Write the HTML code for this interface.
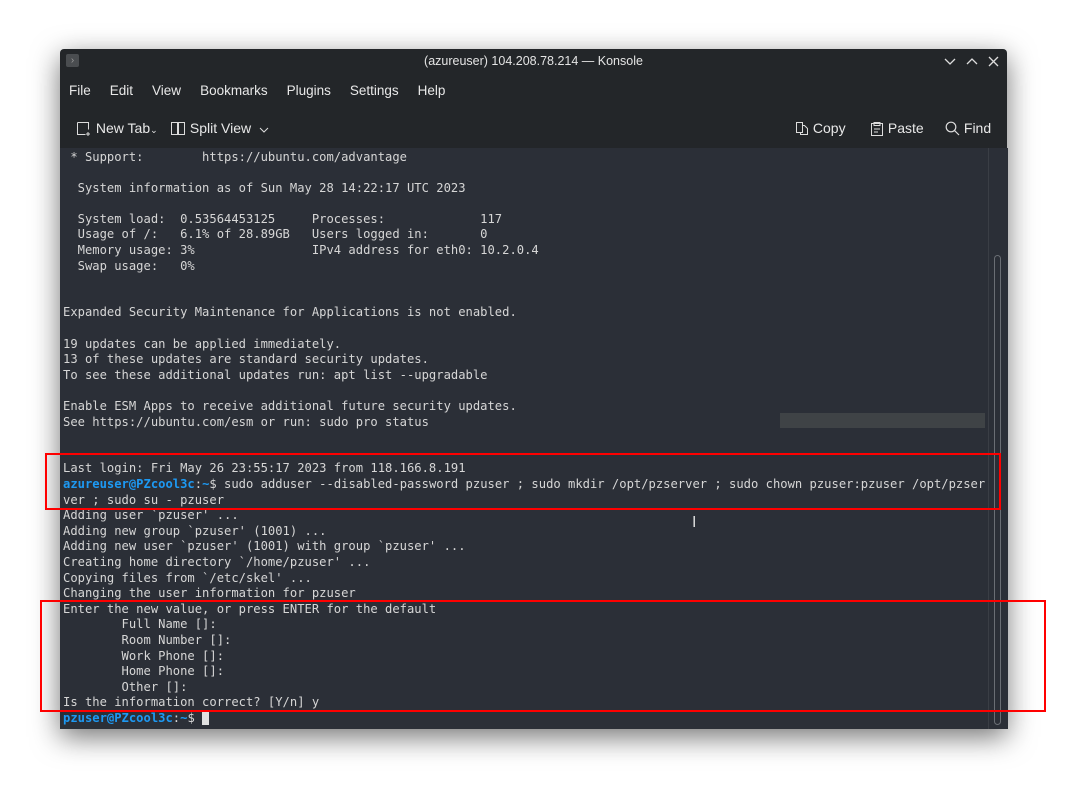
<!DOCTYPE html>
<html><head><meta charset="utf-8"><style>
html,body{margin:0;padding:0;background:#fff;width:1067px;height:800px;overflow:hidden;position:relative;font-family:"Liberation Sans","DejaVu Sans",sans-serif}
.win{position:absolute;left:60px;top:49px;width:947px;height:680px;background:#232629;border-radius:4px 4px 0 0;box-shadow:0 8px 28px rgba(0,0,0,.55)}
.title{position:absolute;left:0;right:0;top:5px;text-align:center;color:#e4e4e4;font-size:12.5px}
.menu{position:absolute;top:34px;left:9px;color:#e8e8e8;font-size:13.5px}
.menu span{margin-right:19px}
.tb{position:absolute;top:71px;color:#e8e8e8;font-size:14px}
.term{position:absolute;left:0;top:99px;width:928px;height:581px;background:#2b2f37}
.sb{position:absolute;left:928px;top:99px;width:19px;height:581px;background:#2b2f37;border-left:1px solid #3a3e45}
pre{position:absolute;left:3px;top:1.5px;margin:0;font-family:"DejaVu Sans Mono",monospace;font-size:12.16px;line-height:15.6px;color:#d6d6d6}
.p{color:#1d99f3;font-weight:bold}
.red{position:absolute;border:2.5px solid #f00;box-sizing:border-box}
</style></head><body>
<div class="win">
 <div style="position:absolute;left:6px;top:5px;width:13px;height:13px;background:#4a4d50;border-radius:2px;color:#999;font-size:10px;line-height:13px;text-align:center">›</div>
 <div class="title">(azureuser) 104.208.78.214 — Konsole</div>
 <svg style="position:absolute;left:884px;top:7px" width="58" height="12" stroke="#ddd" stroke-width="1.3" fill="none"><path d="M1 3l5 5 5-5"/><path d="M23 8l5-5 5 5"/><path d="M45 1l9 9M54 1l-9 9"/></svg>
 <div class="menu"><span>File</span><span>Edit</span><span>View</span><span>Bookmarks</span><span>Plugins</span><span>Settings</span><span>Help</span></div>
 <div class="tb" style="left:16px"><svg width="16" height="15" style="vertical-align:-3px" stroke="#ddd" fill="none"><path d="M1.5 1.5h11v7M1.5 1.5v12h8M12 11v4M10 13h4"/></svg> New Tab<span style="font-size:9px">⌄</span></div>
 <div class="tb" style="left:110px"><svg width="16" height="15" style="vertical-align:-3px" stroke="#ddd" fill="none"><rect x="1.5" y="1.5" width="6" height="12"/><rect x="8.5" y="1.5" width="6" height="12"/></svg> Split View &nbsp;<svg width="10" height="6" stroke="#ddd" fill="none"><path d="M1 1l4 4 4-4"/></svg></div>
 <div class="tb" style="left:735px"><svg width="14" height="15" style="vertical-align:-3px" stroke="#ddd" fill="none"><path d="M1.5 1.5h6v10h-6z M7.5 4.5h2l3 3v6h-7v-2"/></svg> Copy</div>
 <div class="tb" style="left:810px"><svg width="14" height="15" style="vertical-align:-3px" stroke="#ddd" fill="none"><rect x="1.5" y="2.5" width="11" height="12"/><path d="M4 1.5h6v3H4zM4 8h6M4 11h4"/></svg> Paste</div>
 <div class="tb" style="left:885px"><svg width="15" height="15" style="vertical-align:-3px" stroke="#ddd" fill="none" stroke-width="1.2"><circle cx="6" cy="6" r="4.8"/><path d="M9.5 9.5l4.5 4.5"/></svg> Find</div>
 <div class="term">
  <div style="position:absolute;left:720px;top:265px;width:205px;height:15px;background:#3f4346"></div>
<pre> * Support:        https://ubuntu.com/advantage

  System information as of Sun May 28 14:22:17 UTC 2023

  System load:  0.53564453125     Processes:             117
  Usage of /:   6.1% of 28.89GB   Users logged in:       0
  Memory usage: 3%                IPv4 address for eth0: 10.2.0.4
  Swap usage:   0%


Expanded Security Maintenance for Applications is not enabled.

19 updates can be applied immediately.
13 of these updates are standard security updates.
To see these additional updates run: apt list --upgradable

Enable ESM Apps to receive additional future security updates.
See https://ubuntu.com/esm or run: sudo pro status


Last login: Fri May 26 23:55:17 2023 from 118.166.8.191
<span class="p">azureuser@PZcool3c</span>:<span class="p">~</span>$ sudo adduser --disabled-password pzuser ; sudo mkdir /opt/pzserver ; sudo chown pzuser:pzuser /opt/pzser
ver ; sudo su - pzuser
Adding user `pzuser' ...
Adding new group `pzuser' (1001) ...
Adding new user `pzuser' (1001) with group `pzuser' ...
Creating home directory `/home/pzuser' ...
Copying files from `/etc/skel' ...
Changing the user information for pzuser
Enter the new value, or press ENTER for the default
        Full Name []:
        Room Number []:
        Work Phone []:
        Home Phone []:
        Other []:
Is the information correct? [Y/n] y
<span class="p">pzuser@PZcool3c</span>:<span class="p">~</span>$ <span style="background:#e0e0e0"> </span></pre>
 </div>
 <div class="sb"><div style="position:absolute;left:5px;top:107px;width:5px;height:468px;border:1px solid #6a6e74;border-radius:4px"></div></div>
</div>
<div class="red" style="left:45px;top:453px;width:956px;height:57px"></div>
<div class="red" style="left:40px;top:600px;width:1006px;height:112px"></div>
<div style="position:absolute;left:692px;top:513px;color:#ddd;font-size:15px;font-family:'DejaVu Sans',sans-serif">I</div>
</body></html>
